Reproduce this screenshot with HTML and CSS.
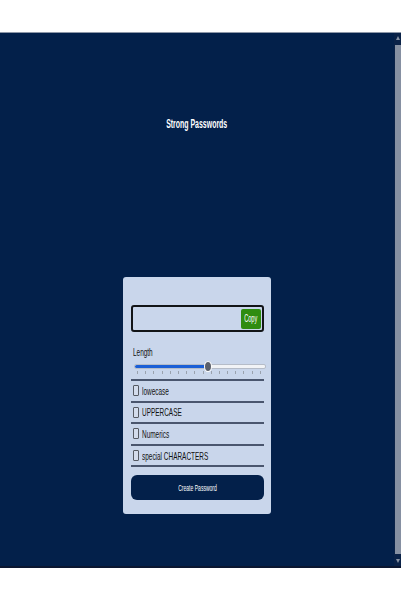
FILE: index.html
```html
<!DOCTYPE html>
<html lang="en">
<head>
<meta charset="utf-8">
<title>Strong Passwords</title>
<link rel="stylesheet" href="styles.css">
</head>
<body>
<div class="top-band"></div>
<div class="app">
  <main class="main">
    <h1 class="title"><span class="sq sq-c">Strong Passwords</span></h1>
    <section class="card">
      <div class="output">
        <button class="copy" type="button"><span class="sq sq-c">Copy</span></button>
      </div>
      <div class="length-label"><span class="sq">Length</span></div>
      <div class="slider">
        <div class="track">
          <div class="fill" style="width:56%"></div>
          <div class="thumb" style="left:56%"></div>
        </div>
        <div class="ticks">
          <i></i><i></i><i></i><i></i><i></i><i></i><i></i><i></i><i></i><i></i><i></i><i></i><i></i><i></i><i></i><i></i>
        </div>
      </div>
      <label class="row"><span class="box"></span><span class="sq">lowecase</span></label>
      <label class="row"><span class="box"></span><span class="sq">UPPERCASE</span></label>
      <label class="row"><span class="box"></span><span class="sq">Numerics</span></label>
      <label class="row"><span class="box"></span><span class="sq">special CHARACTERS</span></label>
      <button class="create" type="button"><span class="sq sq-c">Create Password</span></button>
    </section>
  </main>
  <div class="scrollbar">
    <div class="arrow up"></div>
    <div class="thumb-bar"></div>
    <div class="arrow down"></div>
  </div>
</div>
</body>
</html>
```
FILE: styles.css
```css
html, body {
  margin: 0;
  padding: 0;
  background: #ffffff;
  font-family: "Liberation Sans", Arial, sans-serif;
}

.top-band {
  height: 32px;
  background: #ffffff;
}

.app {
  display: flex;
  height: 533px;
  background: #03204a;
  border-top: 1px solid #8d97a8;
  border-bottom: 2px solid #0b1630;
}

.main {
  flex: 1;
  display: flex;
  flex-direction: column;
  align-items: center;
  padding-top: 84px;
}

.sq {
  display: inline-block;
  transform: scaleX(0.56);
  transform-origin: left center;
  white-space: nowrap;
}

.sq-c {
  transform-origin: center center;
}

.title {
  margin: 0;
  font-size: 12px;
  line-height: 14px;
  font-weight: bold;
  color: #ffffff;
}

.title .sq {
  transform: scaleX(0.58);
}

.card {
  margin-top: 146px;
  width: 148px;
  box-sizing: border-box;
  padding: 28px 7px 14px 8px;
  background: #c9d6eb;
  border-radius: 3px;
  display: flex;
  flex-direction: column;
}

.output {
  height: 27px;
  box-sizing: border-box;
  border: 2px solid #121417;
  border-radius: 3px;
  display: flex;
  justify-content: flex-end;
  align-items: center;
  padding-right: 1px;
}

.copy {
  width: 20px;
  height: 20px;
  padding: 0;
  border: none;
  border-radius: 2px;
  background: #2f8c10;
  color: #ffffff;
  font-family: "Liberation Sans", Arial, sans-serif;
  font-size: 10px;
  display: flex;
  align-items: center;
  justify-content: center;
  overflow: visible;
}

.length-label {
  margin-top: 14px;
  padding-left: 2px;
  font-size: 11.5px;
  line-height: 13px;
  color: #111111;
}

.slider {
  padding: 3px 0 5px 3px;
  border-bottom: 2px solid #4a566e;
}

.track {
  position: relative;
  height: 3px;
  margin-right: -2px;
  background: #f1f3f6;
  border: 1px solid #b5bcc8;
  border-radius: 2px;
  margin-top: 2px;
}

.fill {
  height: 100%;
  background: #1b5fd6;
  border-radius: 2px;
}

.thumb {
  position: absolute;
  top: -4px;
  width: 8px;
  height: 11px;
  margin-left: -4px;
  box-sizing: border-box;
  border: 1.5px solid #ffffff;
  border-radius: 50%;
  background: #5b606b;
}

.ticks {
  display: flex;
  justify-content: space-between;
  padding: 0 3px;
  margin-top: 2px;
  height: 3px;
}

.ticks i {
  width: 1px;
  height: 3px;
  background: #9aa2ae;
}

.row {
  height: 19.6px;
  display: flex;
  align-items: center;
  gap: 3px;
  padding-left: 2px;
  border-bottom: 2px solid #4a566e;
  font-size: 11.5px;
  color: #111111;
}

.box {
  width: 6px;
  height: 11px;
  flex: none;
  box-sizing: border-box;
  border: 1px solid #555a63;
  border-radius: 1px;
  background: #d3dcec;
}

.create {
  margin-top: 8px;
  height: 25px;
  border: none;
  border-radius: 6px;
  background: #03204a;
  color: #ffffff;
  font-family: "Liberation Sans", Arial, sans-serif;
  font-size: 9px;
  display: flex;
  align-items: center;
  justify-content: center;
  padding: 0;
}

.scrollbar {
  width: 7px;
  display: flex;
  flex-direction: column;
  align-items: center;
  background: #0a2248;
}

.arrow {
  width: 0;
  height: 0;
  border-left: 2.5px solid transparent;
  border-right: 2.5px solid transparent;
  margin: 3px 0;
}

.arrow.up {
  border-bottom: 4px solid #8792a4;
}

.arrow.down {
  border-top: 4px solid #8792a4;
}

.thumb-bar {
  flex: 1;
  width: 6px;
  background: #8690a2;
  margin: 2px 0;
}
```
